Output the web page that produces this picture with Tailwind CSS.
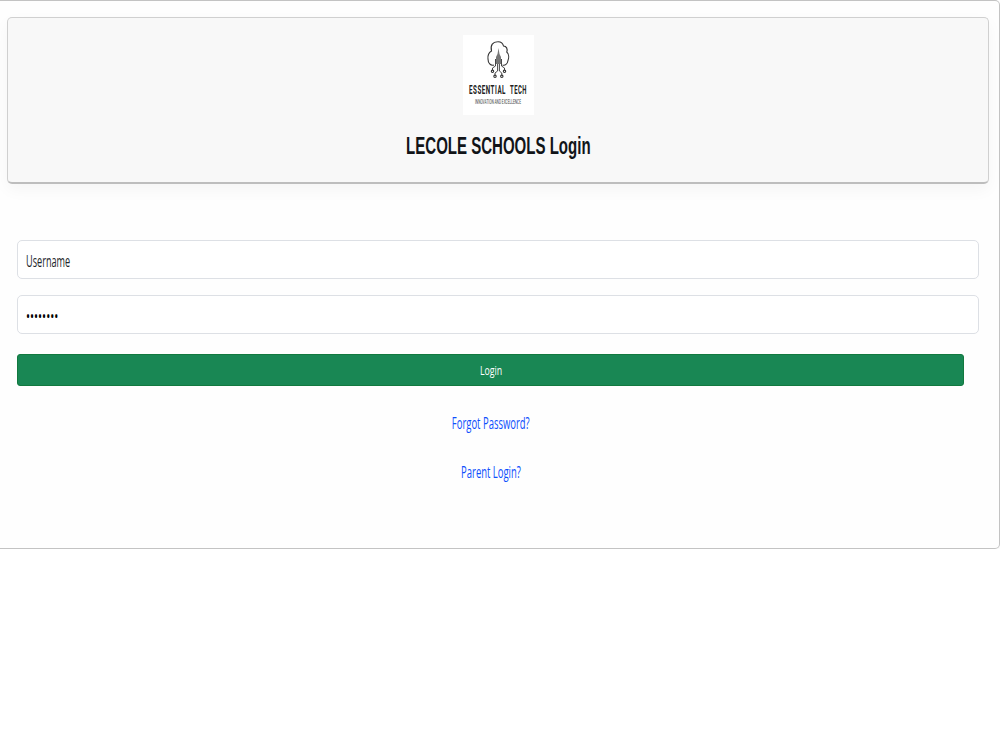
<!DOCTYPE html>
<html lang="en">
<head>
  <meta charset="UTF-8" />
  <meta name="viewport" content="width=device-width, initial-scale=1.0"/>
  <title>LECOLE SCHOOLS Login</title>
  <script src="https://cdn.jsdelivr.net/npm/@tailwindcss/browser@4"></script>
</head>
<body class="bg-white font-['Open_Sans','Noto_Sans',sans-serif] text-[15.5px] leading-6 text-[#212529] overflow-hidden">
  <div class="h-[549px] pl-[7px] pr-[10px] pt-4 border border-l-0 border-[#c3c3c3] rounded-r-[5px] bg-[#fefefe] shadow-[0_8px_16px_rgba(0,0,0,0.04)]">

    <!-- Header -->
    <div class="h-[167px] flex flex-col items-center pt-[17px] bg-[#f8f8f8] border border-[#d0d0d0] border-b-2 border-b-[#bdbdbd] rounded-[5px] shadow-[0_6px_16px_rgba(0,0,0,0.04)]">
      <svg class="w-[71px] h-[80px] shrink-0" viewBox="0 0 71 80">
        <rect width="71" height="80" fill="#fff"/>
        <g fill="none" stroke="#333" stroke-width="1.1">
          <path d="M31 30C27.500 31 25 28 25 24C24.500 20 26 17.500 28.500 16C27 10 30 6.700 34.500 6.700C38 6.500 40 8.500 40.500 11C43.500 11 44.800 14 43.800 17C46 19 46 23 45 25.500C44.500 29 42 31 39.500 30"/>
          <path stroke-width="0.900" d="M32.500 24V31L29.500 33V35M34.600 26V36L32 38V40M36.400 26V36L38.800 38V40M38.500 24V31L41.500 33V35"/>
          <circle cx="29.500" cy="36.300" r="1.200"/>
          <circle cx="32" cy="41.300" r="1.200"/>
          <circle cx="38.800" cy="41.300" r="1.200"/>
          <circle cx="41.500" cy="36.300" r="1.200"/>
        </g>
        <path d="M35.500 13L36.500 19L38 22V29H33V22L34.500 19Z" fill="#777"/>
        <g font-family="Roboto" fill="#222">
          <text x="6" y="59" textLength="37" lengthAdjust="spacingAndGlyphs" font-size="12" font-weight="700" letter-spacing="1">ESSENTIAL</text>
          <text x="47" y="59" textLength="17" lengthAdjust="spacingAndGlyphs" font-size="12" font-weight="700" letter-spacing="1">TECH</text>
          <text x="12" y="69" textLength="46" lengthAdjust="spacingAndGlyphs" font-size="6.500" fill="#444">INNOVATION AND EXCELLENCE</text>
        </g>
      </svg>
      <h1 class="mt-[15px] text-2xl leading-8 font-bold font-['Liberation_Sans',sans-serif] text-[#111418] whitespace-nowrap scale-x-[0.626]">LECOLE SCHOOLS Login</h1>
    </div>

    <!-- Login form -->
    <form class="mt-[56px] mx-[10px]">
      <div class="h-[39px] flex items-center pl-2 pt-0.5 border border-[#dde0e5] rounded-[5px] bg-white">
        <input type="text" value="Username" class="w-[300px] outline-none origin-left scale-x-[0.59]">
      </div>
      <div class="h-[39px] mt-4 flex items-center pl-2 pt-0.5 border border-[#dde0e5] rounded-[5px] bg-white">
        <input type="password" value="password" class="w-[300px] outline-none text-base text-black origin-left scale-x-[0.67]">
      </div>
      <div class="w-[947px] flex flex-col items-center">
        <button type="button" class="w-full h-8 mt-5 pl-px bg-[#198754] border border-[#12793f] rounded-[3px] text-white text-[13.5px]">
          <span class="inline-block scale-x-[0.65]">Login</span>
        </button>
        <a href="#" class="mt-[25px] text-[#0d4ffd] scale-x-[0.61]">Forgot Password?</a>
        <a href="#" class="mt-[25px] text-[#0d4ffd] scale-x-[0.61]">Parent Login?</a>
      </div>
    </form>
  </div>
</body>
</html>
